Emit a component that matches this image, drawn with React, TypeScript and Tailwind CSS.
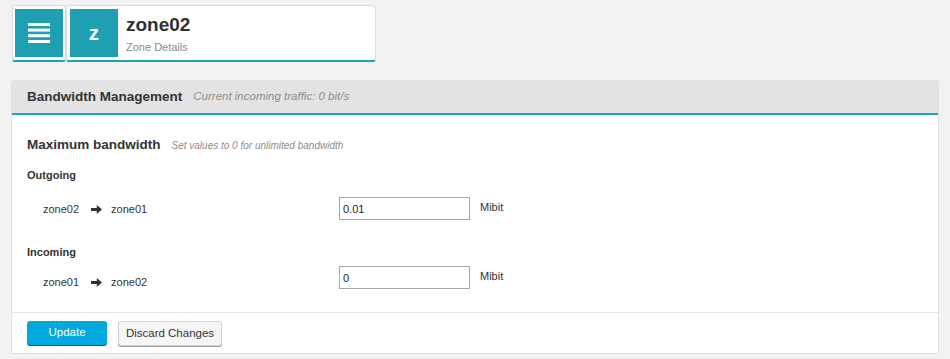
import React from "react";

const font = { fontFamily: '"Liberation Sans", Arial, sans-serif' };

const ArrowRight = () => (
  <svg width="11" height="9" viewBox="0 0 11 9" className="ml-3 mr-[9px]">
    <path d="M0 3h5.8V0L11 4.5 5.8 9V6H0z" fill="#333" />
  </svg>
);

const MenuIcon = () => (
  <svg width="22" height="20" viewBox="0 0 22 20">
    <rect x="0" y="0" width="22" height="3" fill="#fff" />
    <rect x="0" y="5.6" width="22" height="3" fill="#fff" />
    <rect x="0" y="11.2" width="22" height="3" fill="#fff" />
    <rect x="0" y="17" width="22" height="3" fill="#fff" />
  </svg>
);

type Row = { label: string; from: string; to: string; value: string };

const rows: Row[] = [
  { label: "Outgoing", from: "zone02", to: "zone01", value: "0.01" },
  { label: "Incoming", from: "zone01", to: "zone02", value: "0" },
];

const BandwidthRow = ({ row, first }: { row: Row; first: boolean }) => (
  <div>
    <div
      className={`h-4 text-[11px] font-bold leading-4 text-[#333] ${first ? "mt-3" : "mt-6"}`}
    >
      {row.label}
    </div>
    <div className={`flex h-[23px] items-center ${first ? "mt-[14px]" : "mt-[6px]"}`}>
      <div
        className={`ml-4 flex w-[296px] items-center text-[11px] text-[#333] ${first ? "pt-[2px]" : "pt-[9px]"}`}
      >
        <span>{row.from}</span>
        <ArrowRight />
        <span>{row.to}</span>
      </div>
      <input
        defaultValue={row.value}
        className="h-[23px] w-[131px] border border-[#a6a6a6] bg-white px-[3px] text-[11px] text-[#222] outline-none"
        style={font}
      />
      <span className="-mt-[3px] ml-[10px] text-[11px] text-[#333]">Mibit</span>
    </div>
  </div>
);

export default function App() {
  return (
    <div className="min-h-[359px] bg-[#f2f2f2] pt-[5px]" style={font}>
      <div className="ml-[12px] flex">
        <div className="rounded-[3px] border border-b-2 border-[#dcdcdc] border-b-[#1aa3b8] bg-white px-[2px] pt-[3px] pb-[3px]">
          <div className="flex h-12 w-12 items-center justify-center bg-[#1e9fb2]">
            <MenuIcon />
          </div>
        </div>
        <div className="flex h-[57px] w-[310px] rounded-[3px] border border-b-2 border-[#dcdcdc] border-b-[#1aa3b8] bg-white px-[3px] pt-[3px]">
          <div className="flex h-12 w-12 items-center justify-center bg-[#1e9fb2] text-[20px] font-bold text-white">
            z
          </div>
          <div className="ml-2 flex flex-col pt-[4px]">
            <div className="text-[19px] font-bold leading-6 text-[#2d3033]">zone02</div>
            <div className="mt-[2px] text-[11px] leading-4 text-[#8a8a8a]">Zone Details</div>
          </div>
        </div>
      </div>

      <div className="mt-[18px] ml-[11px] w-[928px] rounded-t-[3px] border border-[#e0e0e0] bg-white">
        <div className="flex h-[34px] items-center border-b-2 border-[#1aa5ba] bg-[#e3e3e3] pl-[15px]">
          <span className="text-[13.5px] font-bold text-[#333]">Bandwidth Management</span>
          <span className="ml-[11px] text-[11.5px] italic text-[#8c8c8c]">
            Current incoming traffic: 0 bit/s
          </span>
        </div>

        <div className="px-[15px] pt-[20px] pb-[23px]">
          <div className="flex h-5 items-center">
            <span className="text-[13.5px] font-bold text-[#333]">Maximum bandwidth</span>
            <span className="ml-[11px] text-[10px] italic text-[#8c8c8c]">
              Set values to 0 for unlimited bandwidth
            </span>
          </div>
          {rows.map((row, i) => (
            <BandwidthRow key={row.label} row={row} first={i === 0} />
          ))}
        </div>

        <div className="flex gap-[11px] border-t border-[#e3e3e3] px-[15px] pt-[8px] pb-[7px]">
          <button className="h-6 w-20 rounded-[3px] bg-[#00a9de] text-[11.5px] text-white shadow-[0_1px_0_#2a4a5a]">
            Update
          </button>
          <button className="h-[25px] w-[104px] rounded-[3px] border border-[#d0d0d0] bg-[#f5f5f5] text-[11.5px] text-[#333] shadow-[0_1px_0_#9a9a9a]">
            Discard Changes
          </button>
        </div>
      </div>
    </div>
  );
}
